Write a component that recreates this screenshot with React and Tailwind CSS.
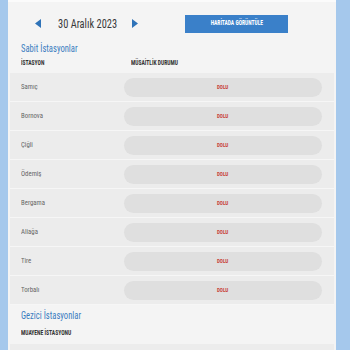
import React from "react";

const stations = ["Samıç", "Bornova", "Çiğli", "Ödemiş", "Bergama", "Aliağa", "Tire", "Torbalı"];
const font = { fontFamily: '"Liberation Sans Narrow", "Roboto Condensed", Roboto, sans-serif' };

export default function App() {
  return (
    <div className="flex w-[350px] h-[350px] overflow-hidden bg-[#a5c8ec]" style={font}>
      <div className="w-[8px] shrink-0 bg-[#a5c8ec]" />
      <div className="w-[328px] shrink-0 bg-[#f4f4f4] border-t-2 border-[#fbfbfb] flex flex-col overflow-hidden">
        <div className="h-[40px] shrink-0 flex items-center pt-[3px] leading-none">
          <div className="w-[175px] flex items-center">
            <svg width="6" height="9" viewBox="0 0 6 9" className="ml-[27px]">
              <polygon points="6,0 6,9 0,4.5" fill="#2f73b8" />
            </svg>
            <span className="ml-[17px] w-[56px] whitespace-nowrap flex">
              <span className="inline-block origin-left scale-x-[0.8] text-[13px] text-[#3a3a3a]">30 Aralık 2023</span>
            </span>
            <svg width="6" height="9" viewBox="0 0 6 9" className="ml-[18px]">
              <polygon points="0,0 0,9 6,4.5" fill="#2f73b8" />
            </svg>
          </div>
          <button className="ml-[2px] w-[103px] h-[18px] bg-[#3a80c9] text-white flex items-center justify-center leading-none">
            <span className="inline-block scale-x-[0.85] text-[6.5px] font-bold whitespace-nowrap">HARİTADA GÖRÜNTÜLE</span>
          </button>
        </div>
        <div className="shrink-0 pl-[13px] h-[13px] flex items-center whitespace-nowrap leading-none">
          <span className="inline-block origin-left scale-x-[0.78] text-[11px] text-[#3a7cc0]">Sabit İstasyonlar</span>
        </div>
        <div className="shrink-0 h-[18px] pb-[2px] flex items-center text-[7px] leading-none font-bold text-[#333]">
          <span className="pl-[13px] w-[123px] flex"><span className="inline-block origin-left scale-x-[0.8]">İSTASYON</span></span>
          <span className="inline-block origin-left scale-x-[0.8] whitespace-nowrap">MÜSAİTLİK DURUMU</span>
        </div>
        <div className="shrink-0 flex flex-col mx-[2px]">
          {stations.map((s) => (
            <div key={s} className="h-[29px] flex items-center bg-[#ececec] border-b border-[#f6f6f6] leading-none">
              <span className="pl-[11px] w-[114px] flex">
                <span className="inline-block origin-left scale-x-[0.85] text-[8px] text-[#666]">{s}</span>
              </span>
              <div className="w-[198px] h-[19px] rounded-full bg-[#dfdfdf] flex items-center justify-center">
                <span className="inline-block scale-x-[0.85] text-[6px] font-bold text-[#c8433a]">DOLU</span>
              </div>
            </div>
          ))}
        </div>
        <div className="shrink-0 pl-[13px] mt-[3px] h-[14px] flex items-center whitespace-nowrap leading-none">
          <span className="inline-block origin-left scale-x-[0.78] text-[11px] text-[#3a7cc0]">Gezici İstasyonlar</span>
        </div>
        <div className="shrink-0 pl-[13px] h-[22px] pt-[1px] flex items-center text-[7px] leading-none font-bold text-[#333] whitespace-nowrap">
          <span className="inline-block origin-left scale-x-[0.8]">MUAYENE İSTASYONU</span>
        </div>
        <div className="shrink-0 mx-[2px] h-[29px] bg-[#ececec]" />
      </div>
      <div className="flex-1 bg-[#a5c8ec]" />
    </div>
  );
}
